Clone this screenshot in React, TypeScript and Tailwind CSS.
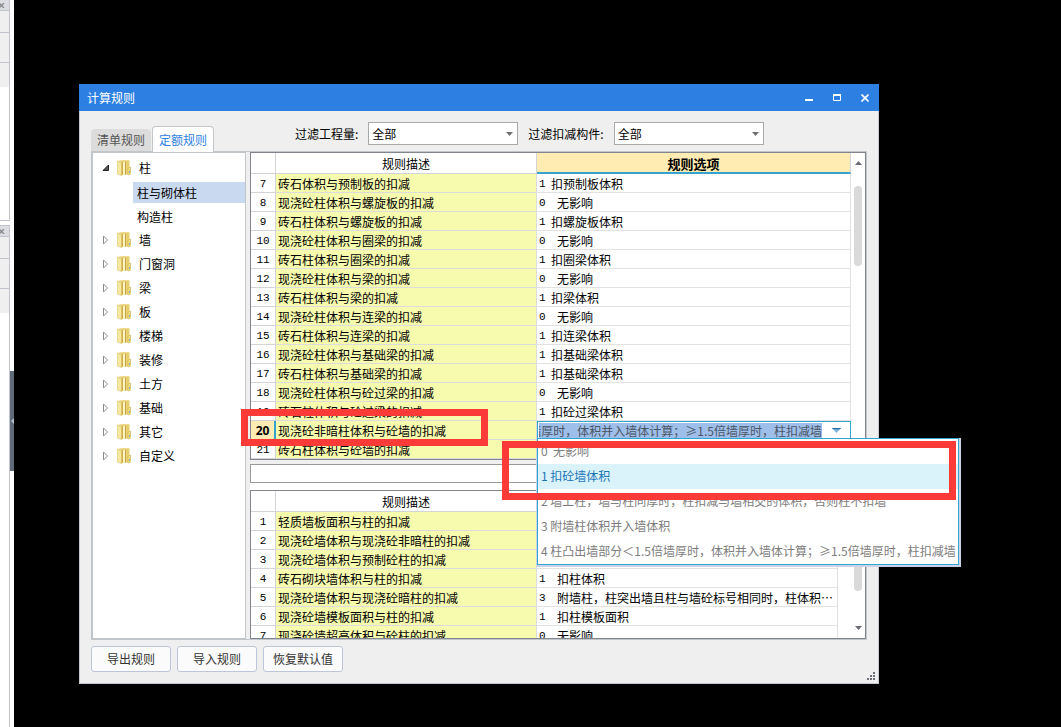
import React, { useState } from "react";

interface RuleRow {
  no: number;
  desc: string;
  code: string;
  option: string;
}

const categories = [
  { name: "柱", open: true, children: ["柱与砌体柱", "构造柱"] },
  { name: "墙" },
  { name: "门窗洞" },
  { name: "梁" },
  { name: "板" },
  { name: "楼梯" },
  { name: "装修" },
  { name: "土方" },
  { name: "基础" },
  { name: "其它" },
  { name: "自定义" },
];

const columnRules: RuleRow[] = [
  { no: 7, desc: "砖石体积与预制板的扣减", code: "1", option: "扣预制板体积" },
  { no: 8, desc: "现浇砼柱体积与螺旋板的扣减", code: "0", option: "无影响" },
  { no: 9, desc: "砖石柱体积与螺旋板的扣减", code: "1", option: "扣螺旋板体积" },
  { no: 10, desc: "现浇砼柱体积与圈梁的扣减", code: "0", option: "无影响" },
  { no: 11, desc: "砖石柱体积与圈梁的扣减", code: "1", option: "扣圈梁体积" },
  { no: 12, desc: "现浇砼柱体积与梁的扣减", code: "0", option: "无影响" },
  { no: 13, desc: "砖石柱体积与梁的扣减", code: "1", option: "扣梁体积" },
  { no: 14, desc: "现浇砼柱体积与连梁的扣减", code: "0", option: "无影响" },
  { no: 15, desc: "砖石柱体积与连梁的扣减", code: "1", option: "扣连梁体积" },
  { no: 16, desc: "现浇砼柱体积与基础梁的扣减", code: "1", option: "扣基础梁体积" },
  { no: 17, desc: "砖石柱体积与基础梁的扣减", code: "1", option: "扣基础梁体积" },
  { no: 18, desc: "现浇砼柱体积与砼过梁的扣减", code: "0", option: "无影响" },
  { no: 19, desc: "砖石柱体积与砼过梁的扣减", code: "1", option: "扣砼过梁体积" },
  { no: 20, desc: "现浇砼非暗柱体积与砼墙的扣减", code: "4", option: "" },
  { no: 21, desc: "砖石柱体积与砼墙的扣减", code: "", option: "" },
];

const wallRules: RuleRow[] = [
  { no: 1, desc: "轻质墙板面积与柱的扣减", code: "", option: "" },
  { no: 2, desc: "现浇砼墙体积与现浇砼非暗柱的扣减", code: "", option: "" },
  { no: 3, desc: "现浇砼墙体积与预制砼柱的扣减", code: "", option: "" },
  { no: 4, desc: "砖石砌块墙体积与柱的扣减", code: "1", option: "扣柱体积" },
  {
    no: 5,
    desc: "现浇砼墙体积与现浇砼暗柱的扣减",
    code: "3",
    option: "附墙柱，柱突出墙且柱与墙砼标号相同时，柱体积⋯",
  },
  { no: 6, desc: "现浇砼墙模板面积与柱的扣减", code: "1", option: "扣柱模板面积" },
  { no: 7, desc: "现浇砼墙超高体积与砼柱的扣减", code: "0", option: "无影响" },
];

const options = [
  "0  无影响",
  "1 扣砼墙体积",
  "2 墙上柱，墙与柱同厚时，柱扣减与墙相交的体积，否则柱不扣墙",
  "3 附墙柱体积并入墙体积",
  "4 柱凸出墙部分＜1.5倍墙厚时，体积并入墙体计算；≥1.5倍墙厚时，柱扣减墙",
];

const FolderIcon = () => (
  <svg width="14" height="16" viewBox="0 0 14 16" aria-hidden="true">
    <path d="M0.5 1 L5 0.3 H12.5 V7 H13.5 V14.5 H4 L0.5 14Z" fill="#e8d070" />
    <path d="M0.5 1 L4.5 2.5 V15.8 L0.5 14Z" fill="#f4e8a2" stroke="#dfc96c" strokeWidth="0.5" />
    <path d="M4.5 2.8 L6 2 V14.7 L4.5 15.5Z" fill="#d0b04e" />
    <path d="M6 2 H8 V14.5 H6Z" fill="#f9f2c4" />
    <path d="M8 2 H9 V14.5 H8Z" fill="#c4a548" />
    <path d="M11 8 L13.5 7 V14 L11 15Z" fill="#f0dd85" stroke="#d2b34c" strokeWidth="0.5" />
    <path d="M12.5 11 V13" stroke="#6fa7c4" />
  </svg>
);

const TreeArrow = ({ open }: { open?: boolean }) => (
  <svg width="8" height="10" viewBox="0 0 8 10" aria-hidden="true">
    {open ? (
      <path d="M6.5 2 V7.5 H1Z" fill="#555" stroke="#222" />
    ) : (
      <path d="M1.5 1.2 L5.7 5 L1.5 8.8Z" fill="#fff" stroke="#8c8c8c" />
    )}
  </svg>
);

const CaretDown = ({ className }: { className?: string }) => (
  <svg width="7" height="4" viewBox="0 0 7 4" className={className} aria-hidden="true">
    <path d="M0 0 H7 L3.5 4Z" fill="currentColor" />
  </svg>
);

const FilterSelect = ({ id, label }: { id: string; label: string }) => {
  return (
    <div className="flex items-center gap-[10px]">
      <label htmlFor={id} className="whitespace-nowrap text-black">
        {label}
      </label>
      <div className="relative">
        <select
          id={id}
          className="block h-[23px] w-[150px] appearance-none border border-[#a9a9a9] bg-white px-[3px] leading-[21px] text-black outline-none"
        >
          <option>全部</option>
        </select>
        <CaretDown className="pointer-events-none absolute right-[5px] top-[10px] text-[#707070]" />
      </div>
    </div>
  );
};

const CellEditor = () => {
  return (
    <div className="flex h-[19px] items-center border border-[#33a4d0] bg-white pl-px">
      <input
        aria-label="规则选项"
        readOnly
        value="柱凸出墙部分＜1.5倍墙厚时，体积并入墙体计算；≥1.5倍墙厚时，柱扣减墙"
        className="h-4 min-w-0 flex-1 bg-[#9fbfeb] p-0 leading-4 text-[#4b5563] outline-none [direction:rtl]"
      />
      <button aria-label="展开选项" className="flex w-7 items-center justify-center">
        <svg width="9" height="5" viewBox="0 0 9 5">
          <path d="M0 0 H9 L4.5 5Z" fill="#7fb2dc" />
          <path d="M0 0 H9 L8 1.2 H1Z" fill="#2a6fa8" />
        </svg>
      </button>
    </div>
  );
};

interface TableProps {
  rows: RuleRow[];
  current?: number;
  wideCode?: boolean;
}

const RuleTable = ({ rows, current, wideCode }: TableProps) => {
  return (
    <table className="w-full table-fixed border-separate border-spacing-0">
      <thead>
        <tr className="h-[21px]">
          <th className="w-[25px] border-b border-r border-[#d4d4d8] bg-white p-0"></th>
          <th className="w-[261px] border-b border-r border-[#d4d4d8] bg-white p-0 pt-[2px] font-normal leading-[18px]">
            规则描述
          </th>
          <th
            className={
              current
                ? "border-b-2 border-r border-b-[#35a3d0] border-r-[#d4d4d8] bg-[#ffecb3] p-0 pt-[2px] text-[13px] font-bold leading-[17px]"
                : "border-b border-r border-[#d4d4d8] bg-white p-0 pt-[2px] font-normal leading-[18px]"
            }
          >
            规则选项
          </th>
        </tr>
      </thead>
      <tbody>
        {rows.map((row) => {
          const active = row.no === current;
          return (
            <tr key={row.no} className="h-[19px]">
              <td
                className={
                  active
                    ? "border-b border-r-2 border-b-[#d4d4d8] border-r-[#35a3d0] bg-[#ffecb3] p-0 pt-[2px] text-center font-['Noto_Sans'] font-bold leading-4"
                    : "border-b border-r border-[#d4d4d8] bg-white p-0 pt-[2px] text-center font-['Liberation_Mono'] text-[11px] leading-4"
                }
              >
                {row.no}
              </td>
              <td className="border-b border-r border-[#dcdcdc] bg-[#f7fbae] p-0 pl-[2px] pt-[2px] leading-4 whitespace-nowrap">
                {row.desc}
              </td>
              {active ? (
                <td className="p-0">
                  <CellEditor />
                </td>
              ) : (
                <td className="border-b border-r border-[#e2e2e2] bg-white p-0 pl-[2px] pt-[2px] whitespace-nowrap">
                  <div className="flex h-4 leading-4">
                    <span
                      className={`shrink-0 font-['Liberation_Mono'] text-[11px] ${
                        wideCode || row.code === "0" ? "w-[18px]" : "w-3"
                      }`}
                    >
                      {row.code}
                    </span>
                    <span>{row.option}</span>
                  </div>
                </td>
              )}
            </tr>
          );
        })}
      </tbody>
    </table>
  );
};

const OptionPopup = () => {
  const [selected, setSelected] = useState(1);
  return (
    <div className="absolute left-[286px] top-[286px] w-[425px] border-b-2 border-l border-r-2 border-[#ccd3e6]">
      <ul role="listbox" aria-label="规则选项" className="border border-[#33a4d0] bg-white">
        {options.map((each, index) => (
          <li
            key={index}
            role="option"
            aria-selected={index === selected}
            onClick={() => setSelected(index)}
            className={`h-[25px] whitespace-pre pl-[3px] leading-[23px] ${
              index === selected ? "bg-[#daf3fa] text-[#1b74b8]" : "text-[#7d7d7d]"
            }`}
          >
            {each}
          </li>
        ))}
      </ul>
      <div className="pointer-events-none absolute -left-[35px] right-[3px] top-[3px] h-[59px] border-[7px] border-[#fc3a38]" />
    </div>
  );
};

const DockPanel = ({ className }: { className?: string }) => (
  <div className={`flex w-[10px] flex-col border-r border-[#c0c3c9] bg-white ${className ?? ""}`}>
    <div className="flex h-[11px] shrink-0 items-center border-b border-[#c0c3c9] bg-[#dcdde3]">
      <svg width="5" height="5" viewBox="0 0 5 5" aria-hidden="true">
        <path d="M-1 0 L4 5 M4 0 L-1 5" stroke="#888" strokeWidth="1.3" />
      </svg>
    </div>
    <div className="h-[22px] border-b border-[#c0c3c9] bg-[#efefef]" />
    <div className="h-[30px] border-b border-[#c0c3c9] bg-[#efefef]" />
    <div className="h-6 bg-[#efefef]" />
  </div>
);

const Sidebar = () => (
  <aside className="relative flex w-[14px] shrink-0 flex-col bg-white">
    <DockPanel className="h-[221px] border-b" />
    <div className="h-1" />
    <DockPanel className="flex-1 border-t" />
    <button
      aria-label="收起"
      className="absolute right-0 top-[371px] flex h-[100px] w-1 items-center bg-[#5f6b79]"
    >
      <svg width="4" height="6" viewBox="0 0 4 6">
        <path d="M4 0 V6 L1 3Z" fill="#b3bac2" />
      </svg>
    </button>
  </aside>
);

const App = () => {
  const actions = ["导出规则", "导入规则", "恢复默认值"];
  return (
    <div className="flex h-screen overflow-hidden bg-black font-['Noto_Sans_CJK_SC',sans-serif] text-xs text-black">
      <Sidebar />
      <main className="flex min-w-0 flex-1 flex-col pb-[43px] pl-[65px] pr-[182px] pt-[84px]">
        <section className="flex min-h-0 flex-1 flex-col bg-[#efefef]">
          <header className="flex h-[27px] shrink-0 items-center justify-between bg-[#2d80e2] pl-2 pr-[10px] text-white">
            <h1>计算规则</h1>
            <div className="flex gap-5">
              <button aria-label="最小化">
                <svg width="8" height="8" viewBox="0 0 8 8">
                  <path d="M0 6 H8" stroke="#fff" strokeWidth="2" />
                </svg>
              </button>
              <button aria-label="最大化">
                <svg width="8" height="8" viewBox="0 0 8 8">
                  <path d="M0.5 1 V6.5 H7.5 V1" fill="none" stroke="#fff" />
                  <path d="M0 1 H8" stroke="#fff" strokeWidth="2" />
                </svg>
              </button>
              <button aria-label="关闭">
                <svg width="8" height="8" viewBox="0 0 8 8">
                  <path d="M0.5 0.5 L7.5 7.5 M7.5 0.5 L0.5 7.5" stroke="#fff" strokeWidth="1.7" />
                </svg>
              </button>
            </div>
          </header>

          <div className="relative flex min-h-0 flex-1 flex-col border border-t-0 border-[#c1c6cf] px-[11px] pb-[11px]">
            <div className="flex h-10 shrink-0 items-end">
              <div role="tablist" className="flex items-end gap-px">
                <button
                  role="tab"
                  aria-selected="false"
                  className="h-[22px] w-[60px] rounded-t bg-[#dcdcdc] text-[#555]"
                >
                  清单规则
                </button>
                <button
                  role="tab"
                  aria-selected="true"
                  className="relative z-10 -mb-px h-[26px] w-[62px] rounded-t border border-b-0 border-[#c1c6ca] bg-white text-[#2d80e2]"
                >
                  定额规则
                </button>
              </div>
              <div className="mb-[6px] ml-[81px] flex gap-[10px]">
                <FilterSelect id="quantity" label="过滤工程量:" />
                <FilterSelect id="component" label="过滤扣减构件:" />
              </div>
            </div>

            <div className="flex min-h-0 flex-1 gap-1 border border-[#c1c6ca]">
              <ul className="w-[154px] shrink-0 border border-[#c1c6ca] bg-white pt-[3px]">
                {categories.map((each) => (
                  <li key={each.name}>
                    <div className="flex h-6 items-center pl-[9px]">
                      <TreeArrow open={each.open} />
                      <span className="ml-[7px] mr-[8px]">
                        <FolderIcon />
                      </span>
                      {each.name}
                    </div>
                    {each.children?.map((child, index) => (
                      <div key={child} className="flex h-6 items-center pl-10">
                        <span
                          className={`h-[21px] flex-1 pl-1 leading-[21px] ${
                            index === 0 ? "bg-[#c9d9f0]" : ""
                          }`}
                        >
                          {child}
                        </span>
                      </div>
                    ))}
                  </li>
                ))}
              </ul>

              <div className="relative flex min-w-0 flex-1 flex-col">
                <div className="flex min-h-0 flex-1 overflow-hidden border border-[#82858f] bg-white">
                  <div className="min-w-0 flex-1 overflow-hidden">
                    <RuleTable rows={columnRules} current={20} />
                  </div>
                  <div className="flex w-[14px] shrink-0 flex-col items-center pt-2">
                    <CaretDown className="rotate-180 text-[#6b6b75]" />
                    <div className="mt-[21px] h-20 w-2 rounded-full bg-[#dadada]" />
                  </div>
                </div>
                <div className="bg-white">
                  <div className="bg-[#efefef] pt-1">
                    <input
                      aria-label="规则说明"
                      className="block h-[19px] w-full border border-[#9a9a9a] bg-white px-1 outline-none"
                    />
                  </div>
                  <div className="h-[7px]" />
                </div>
                <div className="flex h-[149px] shrink-0 overflow-hidden border border-[#82858f] bg-white">
                  <div className="min-w-0 flex-1 overflow-hidden pr-[13px]">
                    <RuleTable rows={wallRules} wideCode />
                  </div>
                  <div className="flex w-[14px] shrink-0 flex-col items-center justify-between pb-2 pt-5">
                    <div className="h-20 w-2 rounded-full bg-[#dadada]" />
                    <CaretDown className="text-[#6b6b75]" />
                  </div>
                </div>

                <div className="pointer-events-none absolute -left-[9px] top-[257px] h-[37px] w-[247px] border-[7px] border-[#fc3a38]" />
                <OptionPopup />
              </div>
            </div>

            <footer className="flex shrink-0 gap-[6px] pt-[6px]">
              {actions.map((each) => (
                <button
                  key={each}
                  className="h-[26px] w-20 rounded-[3px] border border-[#bcc6d8] bg-[#fbfbfb] text-[#333]"
                >
                  {each}
                </button>
              ))}
            </footer>
            <svg
              width="8"
              height="8"
              viewBox="0 0 8 8"
              className="absolute bottom-[3px] right-[3px]"
              aria-hidden="true"
            >
              <path
                d="M6 0h2v2h-2z M3 3h2v2h-2z M6 3h2v2h-2z M0 6h2v2h-2z M3 6h2v2h-2z M6 6h2v2h-2z"
                fill="#6d7078"
              />
            </svg>
          </div>
        </section>
      </main>
    </div>
  );
};

export default App;
